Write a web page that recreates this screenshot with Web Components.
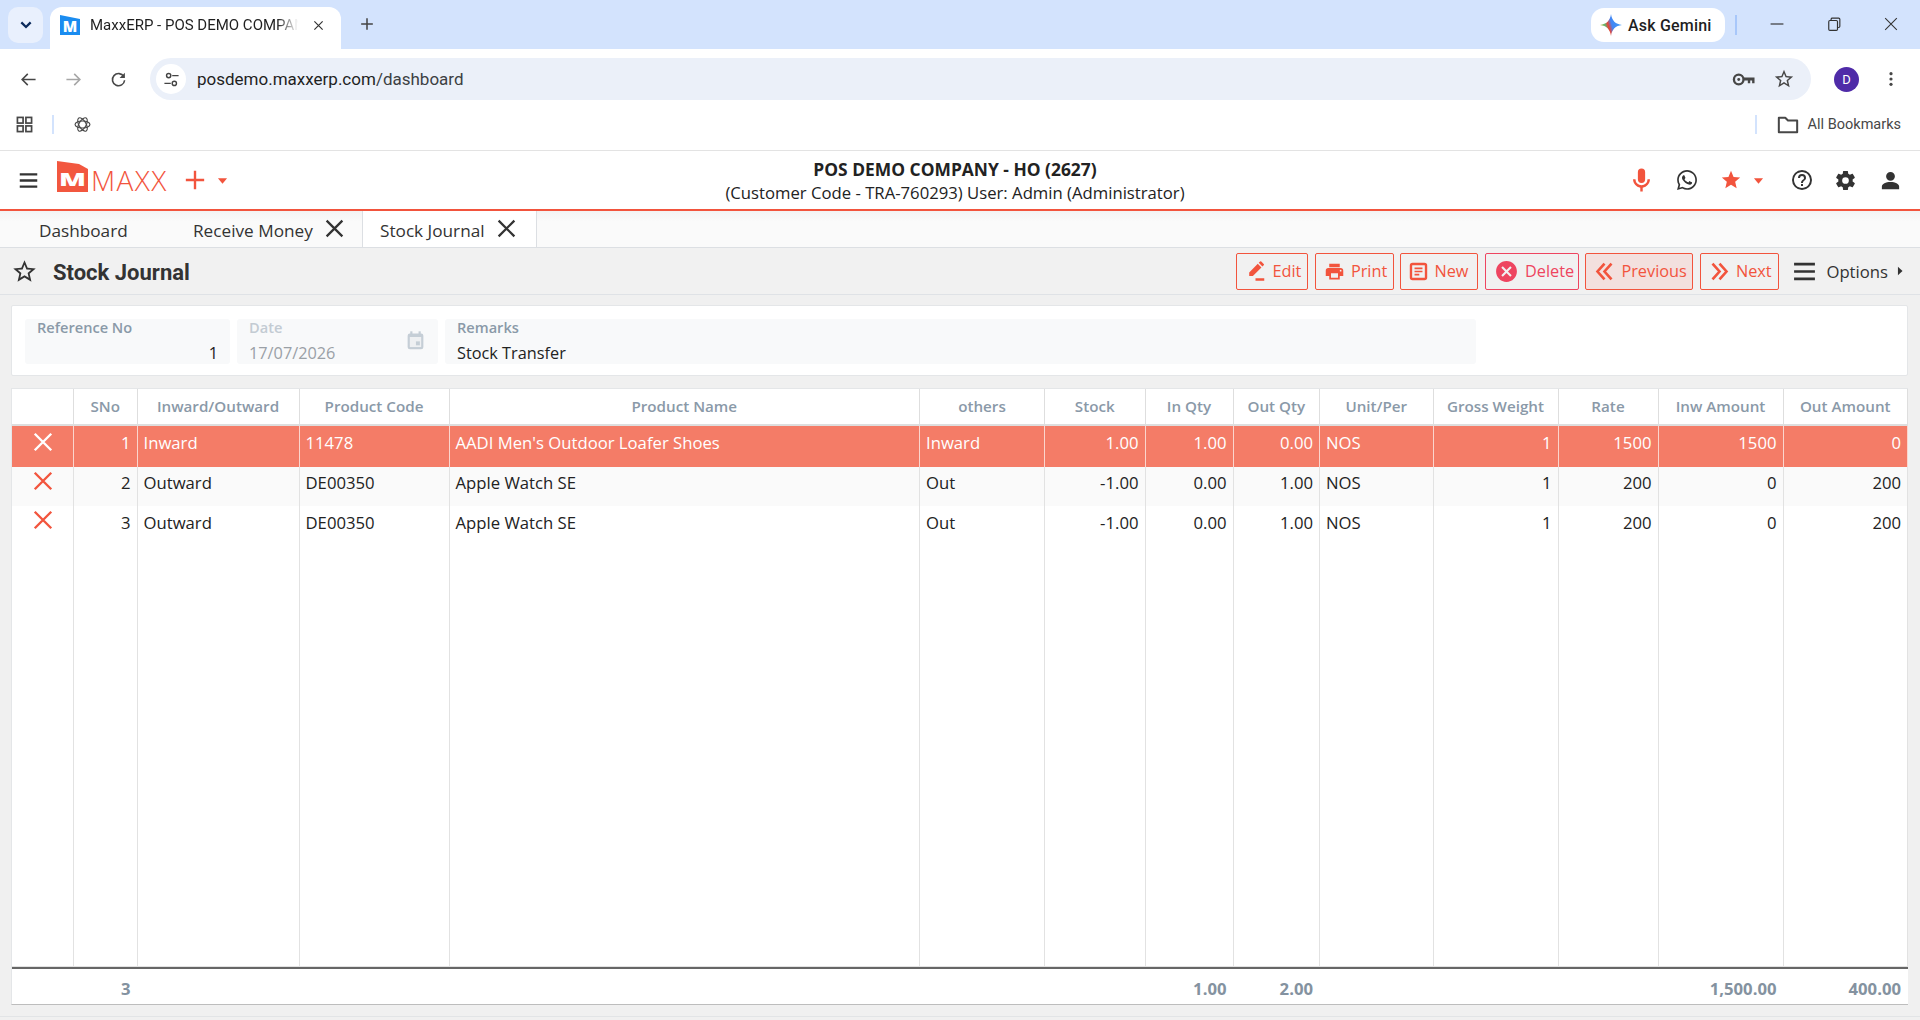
<!DOCTYPE html>
<html lang="en">
<head>
<meta charset="utf-8">
<title>MaxxERP - POS DEMO COMPANY</title>
<style>
  html, body { margin: 0; height: 100%; overflow: hidden; }
  body { display: flex; flex-direction: column; height: 1020px; background: linear-gradient(#f0f0f0 1016px, #e2e4e6 1016px, #e2e4e6 1017px, #f0f0f0 1017px); font-family: "Open Sans", "Noto Sans", sans-serif; color: #212529; }
</style>
</head>
<body>
<browser-chrome></browser-chrome>
<app-header></app-header>
<app-tabs></app-tabs>
<title-bar></title-bar>
<journal-form></journal-form>
<journal-table></journal-table>

<script>
const PATHS = {
  print: 'M18,3H6V7H18M19,12A1,1 0 0,1 18,11A1,1 0 0,1 19,10A1,1 0 0,1 20,11A1,1 0 0,1 19,12M16,19H8V14H16M19,8H5A3,3 0 0,0 2,11V17H6V21H18V17H22V11A3,3 0 0,0 19,8Z',
  closeCircle: 'M12,2C17.53,2 22,6.47 22,12C22,17.53 17.53,22 12,22C6.47,22 2,17.53 2,12C2,6.47 6.47,2 12,2M15.59,7L12,10.59L8.41,7L7,8.41L10.59,12L7,15.59L8.41,17L12,13.41L15.59,17L17,15.59L13.41,12L17,8.41L15.59,7Z',
  mic: 'M12,2A3,3 0 0,1 15,5V11A3,3 0 0,1 12,14A3,3 0 0,1 9,11V5A3,3 0 0,1 12,2M19,11C19,14.53 16.39,17.44 13,17.93V21H11V17.93C7.61,17.44 5,14.53 5,11H7A5,5 0 0,0 12,16A5,5 0 0,0 17,11H19Z',
  whatsapp: 'M12.04 2C6.58 2 2.13 6.45 2.13 11.91C2.13 13.66 2.59 15.36 3.45 16.86L2.05 22L7.3 20.62C8.75 21.41 10.38 21.83 12.04 21.83C17.5 21.83 21.95 17.38 21.95 11.92C21.95 9.27 20.92 6.78 19.05 4.91C17.18 3.03 14.69 2 12.04 2M12.05 3.67C14.25 3.67 16.31 4.53 17.87 6.09C19.42 7.65 20.28 9.72 20.28 11.92C20.28 16.46 16.58 20.15 12.04 20.15C10.56 20.15 9.11 19.76 7.85 19L7.55 18.83L4.43 19.65L5.26 16.61L5.06 16.29C4.24 15 3.8 13.47 3.8 11.91C3.81 7.37 7.5 3.67 12.05 3.67M8.53 7.33C8.37 7.33 8.1 7.39 7.87 7.64C7.65 7.89 7 8.5 7 9.71C7 10.93 7.89 12.1 8 12.27C8.14 12.44 9.76 14.94 12.25 16C12.84 16.27 13.3 16.42 13.66 16.53C14.25 16.72 14.79 16.69 15.22 16.63C15.7 16.56 16.68 16.03 16.89 15.45C17.1 14.87 17.1 14.38 17.04 14.27C16.97 14.17 16.81 14.11 16.56 14C16.31 13.86 15.09 13.26 14.87 13.18C14.64 13.1 14.5 13.06 14.31 13.3C14.15 13.55 13.67 14.11 13.53 14.27C13.38 14.44 13.24 14.46 13 14.34C12.74 14.21 11.94 13.95 11 13.11C10.26 12.45 9.77 11.64 9.62 11.39C9.5 11.15 9.61 11 9.73 10.89C9.84 10.78 10 10.6 10.1 10.45C10.23 10.31 10.27 10.2 10.35 10.04C10.43 9.87 10.39 9.73 10.33 9.61C10.27 9.5 9.77 8.26 9.56 7.77C9.36 7.29 9.16 7.35 9 7.34C8.86 7.34 8.7 7.33 8.53 7.33Z',
  star: 'M12,17.27L18.18,21L16.54,13.97L22,9.24L14.81,8.62L12,2L9.19,8.62L2,9.24L7.45,13.97L5.82,21L12,17.27Z',
  starOutline: 'M12,15.39L8.24,17.66L9.23,13.38L5.91,10.5L10.29,10.13L12,6.09L13.71,10.13L18.09,10.5L14.77,13.38L15.76,17.66M22,9.24L14.81,8.62L12,2L9.19,8.62L2,9.24L7.45,13.97L5.82,21L12,17.27L18.18,21L16.54,13.97L22,9.24Z',
  help: 'M11,18H13V16H11V18M12,2A10,10 0 0,0 2,12A10,10 0 0,0 12,22A10,10 0 0,0 22,12A10,10 0 0,0 12,2M12,20C7.59,20 4,16.41 4,12C4,7.59 7.59,4 12,4C16.41,4 20,7.59 20,12C20,16.41 16.41,20 12,20M12,6A4,4 0 0,0 8,10H10A2,2 0 0,1 12,8A2,2 0 0,1 14,10C14,12 11,11.75 11,15H13C13,12.75 16,12.5 16,10A4,4 0 0,0 12,6Z',
  cog: 'M12,15.5A3.5,3.5 0 0,1 8.5,12A3.5,3.5 0 0,1 12,8.5A3.5,3.5 0 0,1 15.5,12A3.5,3.5 0 0,1 12,15.5M19.43,12.97C19.47,12.65 19.5,12.33 19.5,12C19.5,11.67 19.47,11.34 19.43,11L21.54,9.37C21.73,9.22 21.78,8.95 21.66,8.73L19.66,5.27C19.54,5.05 19.27,4.96 19.05,5.05L16.56,6.05C16.04,5.66 15.5,5.32 14.87,5.07L14.5,2.42C14.46,2.18 14.25,2 14,2H10C9.75,2 9.54,2.18 9.5,2.42L9.13,5.07C8.5,5.32 7.96,5.66 7.44,6.05L4.95,5.05C4.73,4.96 4.46,5.05 4.34,5.27L2.34,8.73C2.21,8.95 2.27,9.22 2.46,9.37L4.57,11C4.53,11.34 4.5,11.67 4.5,12C4.5,12.33 4.53,12.65 4.57,12.97L2.46,14.63C2.27,14.78 2.21,15.05 2.34,15.27L4.34,18.73C4.46,18.95 4.73,19.03 4.95,18.95L7.44,17.94C7.96,18.34 8.5,18.68 9.13,18.93L9.5,21.58C9.54,21.82 9.75,22 10,22H14C14.25,22 14.46,21.82 14.5,21.58L14.87,18.93C15.5,18.67 16.04,18.34 16.56,17.94L19.05,18.95C19.27,19.03 19.54,18.95 19.66,18.73L21.66,15.27C21.78,15.05 21.73,14.78 21.54,14.63L19.43,12.97Z',
  user: 'M12,3A4.6,4.6 0 0,1 16.6,7.6A4.6,4.6 0 0,1 12,12.2A4.6,4.6 0 0,1 7.4,7.6A4.6,4.6 0 0,1 12,3M12,13.6C17,13.6 21,15.6 21,18.2V21H3V18.2C3,15.6 7,13.6 12,13.6Z',
  edit: 'M14.6,3.2L18.8,7.4L9,17.2H4.8V13ZM15.7,2.1L17.2,.6A1,1 0 0,1 18.6,.6L21.4,3.4A1,1 0 0,1 21.4,4.8L19.9,6.3ZM12,19.6H22V22.6H12Z'
};

// stroke icons are kept as plain svg children, filled ones come from PATHS
const STROKES = {
  chevL2: '<path d="M12 3L4 12l8 9M20 3l-8 9 8 9" fill="none" stroke="currentColor" stroke-width="3"/>',
  chevR2: '<path d="M4 3l8 9-8 9M12 3l8 9-8 9" fill="none" stroke="currentColor" stroke-width="3"/>',
  form: '<rect x="2.5" y="2.5" width="19" height="19" rx="2" fill="none" stroke="currentColor" stroke-width="3"/><path d="M7 8h10M7 12h10M7 16h6" stroke="currentColor" stroke-width="2.2"/>',
  menu: '<path d="M2 5h20M2 12h20M2 19h20" stroke="currentColor" stroke-width="2.6"/>',
  xThin: '<path d="M3 3l18 18M21 3L3 21" stroke="currentColor" stroke-width="2.6"/>',
  plus: '<path d="M12 2v20M2 12h20" stroke="currentColor" stroke-width="2.6"/>',
  back: '<path d="M22 12H3M11 4l-8 8 8 8" fill="none" stroke="currentColor" stroke-width="2.2"/>',
  forward: '<path d="M2 12h19M13 4l8 8-8 8" fill="none" stroke="currentColor" stroke-width="2.2"/>',
  reload: '<path d="M19.5 8A8.6 8.6 0 1 0 20.6 13" fill="none" stroke="currentColor" stroke-width="2.2"/><path d="M21 2.5V10h-7.5z" fill="currentColor"/>',
  tune: '<circle cx="8" cy="6.5" r="3" fill="none" stroke="currentColor" stroke-width="2"/><path d="M13 6.5h9M2 17.5h9" stroke="currentColor" stroke-width="2"/><circle cx="16" cy="17.5" r="3" fill="none" stroke="currentColor" stroke-width="2"/>',
  apps: '<g fill="none" stroke="currentColor" stroke-width="2.4"><rect x="2" y="2" width="8" height="8"/><rect x="14" y="2" width="8" height="8"/><rect x="2" y="14" width="8" height="8"/><rect x="14" y="14" width="8" height="8"/></g>',
  openai: '<g fill="none" stroke="currentColor" stroke-width="1.6"><ellipse cx="12" cy="12" rx="10.5" ry="5"/><ellipse cx="12" cy="12" rx="10.5" ry="5" transform="rotate(60 12 12)"/><ellipse cx="12" cy="12" rx="10.5" ry="5" transform="rotate(120 12 12)"/></g>',
  key: '<circle cx="7" cy="12" r="5" fill="none" stroke="currentColor" stroke-width="2.4"/><circle cx="7" cy="12" r="1.5" fill="currentColor"/><path d="M12 10h11.5v6H21v-3h-2v3h-2.5v-3H12z" fill="currentColor"/>',
  folder: '<path d="M2 20V4h7l3 3h10v13z" fill="none" stroke="currentColor" stroke-width="2.2" stroke-linejoin="round"/>',
  dots: '<circle cx="12" cy="4" r="2.4" fill="currentColor"/><circle cx="12" cy="12" r="2.4" fill="currentColor"/><circle cx="12" cy="20" r="2.4" fill="currentColor"/>',
  minimize: '<path d="M1 12h22" stroke="currentColor" stroke-width="2"/>',
  restore: '<path d="M7 5V3.5A2 2 0 0 1 9 2h11a2 2 0 0 1 2 2v12a2 2 0 0 1-2 2h-1" fill="none" stroke="currentColor" stroke-width="2"/><rect x="3" y="6" width="15" height="17" rx="2" fill="none" stroke="currentColor" stroke-width="2"/>',
  winClose: '<path d="M2 2l20 20M22 2L2 22" stroke="currentColor" stroke-width="1.8"/>',
  calendar: '<rect x="3" y="4" width="18" height="18" rx="2.5" fill="currentColor"/><rect x="6" y="1.5" width="2.5" height="4" fill="currentColor"/><rect x="15.5" y="1.5" width="2.5" height="4" fill="currentColor"/><rect x="5.5" y="8" width="13" height="11.5" fill="#eef0f2"/><rect x="12.5" y="13" width="4.5" height="4.5" fill="currentColor"/>',
  gemini: '<defs><linearGradient id="g" x1="0" y1=".8" x2="1" y2=".5"><stop offset="0" stop-color="#f9ab00"/><stop offset=".28" stop-color="#5bb974"/><stop offset=".42" stop-color="#ea4335"/><stop offset=".58" stop-color="#4285f4"/><stop offset="1" stop-color="#3f9bf5"/></linearGradient></defs><path d="M12 0C12.8 7 17 11.2 24 12 17 12.8 12.8 17 12 24 11.2 17 7 12.8 0 12 7 11.2 11.2 7 12 0z" fill="url(#g)"/>',
  caretDown: '<path d="M2 7h20L12 19z" fill="currentColor"/>',
  caretRight: '<path d="M7 2v20l11-10z" fill="currentColor"/>',
  chevDown: '<path d="M5 8l7 7 7-7" fill="none" stroke="currentColor" stroke-width="3.4"/>'
};

class UiIcon extends HTMLElement {
  connectedCallback() {
    const name = this.getAttribute('name');
    const size = this.getAttribute('size') || 24;
    const inner = PATHS[name] ? `<path d="${PATHS[name]}" fill="currentColor"/>` : STROKES[name];
    this.attachShadow({ mode: 'open' }).innerHTML = `
      <style>
        :host { display: inline-flex; flex: none; }
        svg { display: block; }
      </style>
      <svg width="${size}" height="${size}" viewBox="0 0 24 24">${inner}</svg>`;
  }
}
customElements.define('ui-icon', UiIcon);

class BrowserChrome extends HTMLElement {
  constructor() {
    super();
    this.attachShadow({ mode: 'open' }).innerHTML = `
      <style>
        :host { display: block; height: 151px; background: #fff; font-family: "Roboto", "Open Sans", sans-serif; color: #1f1f1f; border-bottom: 1px solid #e3e3e3; box-sizing: border-box; }
        .strip { height: 49px; background: #d3e3fd; display: flex; align-items: flex-start; }
        .more { width: 35px; height: 36px; margin: 7px 0 0 8px; background: #e9f0fd; border-radius: 10px; display: grid; place-content: center; color: #0b2a5c; }
        .tab { width: 291px; height: 42px; margin: 7px 0 0 7px; background: #fff; border-radius: 12px 12px 0 0; display: flex; align-items: center; box-sizing: border-box; padding: 0 13px 6px 10px; }
        .fav { width: 20px; height: 20px; flex: none; }
        .tab-title { width: 208px; margin-left: 10px; font-size: 15px; white-space: nowrap; -webkit-mask-image: linear-gradient(90deg, #000 90%, transparent); mask-image: linear-gradient(90deg, #000 90%, transparent); }
        .tab ui-icon { margin-left: 15px; color: #333; }
        .add { margin: 17px 0 0 19px; color: #444; }
        .spacer { flex: 1; }
        .gemini { width: 134px; height: 34px; margin-top: 8px; background: #fff; border-radius: 13px; display: flex; align-items: center; gap: 6px; padding-left: 9px; box-sizing: border-box; font-size: 16px; font-weight: 500; letter-spacing: .2px; }
        .sep { width: 2px; height: 20px; background: #a8c7fa; }
        .strip .sep { margin: 15px 33px 0 10px; }
        .win { display: flex; gap: 43px; margin: 17px 22px 0 0; color: #333; align-items: center; height: 14px; }
        .toolbar { height: 51px; display: flex; align-items: center; box-sizing: border-box; padding: 9px 0 0 20px; }
        .nav { display: flex; gap: 28px; color: #474747; margin-right: 23px; }
        .nav .off { color: #a6a6a6; }
        .omni { width: 1661px; height: 42px; background: #ebf0f9; border-radius: 21px; display: flex; align-items: center; }
        .tune { width: 30px; height: 30px; margin-left: 6px; border-radius: 50%; background: #fff; display: grid; place-content: center; color: #444; }
        .url { margin-left: 11px; font-size: 17px; color: #3c4043; flex: 1; }
        .url b { font-weight: 400; color: #1f1f1f; }
        .omni .right { display: flex; align-items: center; gap: 18px; margin-right: 16px; color: #474747; }
        .avatar { width: 25px; height: 25px; border-radius: 50%; background: #4f2ba8; color: #fff; font-size: 13px; display: grid; place-content: center; margin-left: 23px; }
        .dots { margin-left: 24px; color: #474747; }
        .bookmarks { height: 50px; display: flex; align-items: center; padding-left: 16px; color: #474747; box-sizing: border-box; padding-bottom: 1px; }
        .bookmarks .sep { height: 19px; margin: 0 20px 0 19px; background: #d3e3fd; }
        .bookmarks .end { margin-left: auto; display: flex; align-items: center; color: #474747; font-size: 14.5px; margin-right: 19px; }
        .bookmarks .end .sep { margin: 0 20px 0 0; }
        .bookmarks .end span { margin-left: 9px; }
      </style>
      <div class="strip">
        <div class="more"><ui-icon name="chevDown" size="16"></ui-icon></div>
        <div class="tab">
          <svg class="fav" viewBox="0 0 20 20"><path d="M0 0l20 4v16H0z" fill="#1a8cf0"/><text x="10" y="17" text-anchor="middle" font-family="Open Sans" font-weight="800" font-size="15" fill="#fff">M</text></svg>
          <span class="tab-title">MaxxERP - POS DEMO COMPAN</span>
          <ui-icon name="xThin" size="11"></ui-icon>
        </div>
        <ui-icon class="add" name="plus" size="14"></ui-icon>
        <div class="spacer"></div>
        <div class="gemini"><ui-icon name="gemini" size="22"></ui-icon>Ask Gemini</div>
        <div class="sep"></div>
        <div class="win">
          <ui-icon name="minimize" size="14"></ui-icon>
          <ui-icon name="restore" size="14"></ui-icon>
          <ui-icon name="winClose" size="14"></ui-icon>
        </div>
      </div>
      <div class="toolbar">
        <div class="nav">
          <ui-icon name="back" size="17"></ui-icon>
          <ui-icon class="off" name="forward" size="17"></ui-icon>
          <ui-icon name="reload" size="17"></ui-icon>
        </div>
        <div class="omni">
          <div class="tune"><ui-icon name="tune" size="17"></ui-icon></div>
          <span class="url"><b>posdemo.maxxerp.com</b>/dashboard</span>
          <div class="right">
            <ui-icon name="key" size="23"></ui-icon>
            <ui-icon name="starOutline" size="22"></ui-icon>
          </div>
        </div>
        <div class="avatar">D</div>
        <ui-icon class="dots" name="dots" size="16"></ui-icon>
      </div>
      <div class="bookmarks">
        <ui-icon name="apps" size="17"></ui-icon>
        <div class="sep"></div>
        <ui-icon name="openai" size="17"></ui-icon>
        <div class="end">
          <div class="sep"></div>
          <ui-icon name="folder" size="22"></ui-icon>
          <span>All Bookmarks</span>
        </div>
      </div>`;
  }
}
customElements.define('browser-chrome', BrowserChrome);

class AppHeader extends HTMLElement {
  constructor() {
    super();
    this.attachShadow({ mode: 'open' }).innerHTML = `
      <style>
        :host { display: flex; align-items: center; height: 60px; flex: none; box-sizing: border-box; background: #fff; border-bottom: 2px solid #f2543d; color: #333; }
        .left { display: flex; align-items: center; width: 470px; padding-left: 18px; box-sizing: border-box; flex: none; }
        .logo { width: 31px; height: 31px; margin-left: 18px; margin-top: -8px; }
        .brand { margin-left: 3px; font-size: 28px; font-weight: 300; color: #f2543d; letter-spacing: 1.4px; line-height: 30px; }
        .plus { margin-left: 16px; color: #f2543d; }
        .caret { margin-left: 11px; color: #f2543d; }
        .center { flex: 1; text-align: center; font-size: 16.7px; line-height: 24px; color: #222; white-space: nowrap; padding-top: 2px; }
        .center b { display: block; font-size: 17.4px; font-weight: 700; }
        .right { width: 480px; flex: none; display: flex; align-items: center; justify-content: flex-end; color: #333; }
        .red { color: #f2543d; }
      </style>
      <div class="left">
        <ui-icon name="menu" size="21"></ui-icon>
        <svg class="logo" viewBox="0 0 31 31"><path d="M0 0l22 3 9 5v23H0z" fill="#f2573f"/><text x="15.5" y="25" text-anchor="middle" font-family="Open Sans" font-weight="800" font-size="18" textLength="27" lengthAdjust="spacingAndGlyphs" fill="#fff">M</text></svg>
        <span class="brand">MAXX</span>
        <ui-icon class="plus" name="plus" size="22"></ui-icon>
        <ui-icon class="caret" name="caretDown" size="11"></ui-icon>
      </div>
      <div class="center"><b>POS DEMO COMPANY - HO (2627)</b>(Customer Code - TRA-760293) User: Admin (Administrator)</div>
      <div class="right">
        <ui-icon class="red" name="mic" size="29" style="margin-right:19px"></ui-icon>
        <ui-icon name="whatsapp" size="24" style="margin-right:21px"></ui-icon>
        <ui-icon class="red" name="star" size="22" style="margin-right:11px"></ui-icon>
        <ui-icon class="red" name="caretDown" size="11" style="margin-right:26px"></ui-icon>
        <ui-icon name="help" size="24" style="margin-right:20px"></ui-icon>
        <ui-icon name="cog" size="23" style="margin-right:22px"></ui-icon>
        <ui-icon name="user" size="23" style="margin-right:18px"></ui-icon>
      </div>`;
  }
}
customElements.define('app-header', AppHeader);

class AppTabs extends HTMLElement {
  constructor() {
    super();
    this.attachShadow({ mode: 'open' }).innerHTML = `
      <style>
        :host { display: flex; height: 37px; flex: none; box-sizing: border-box; background: linear-gradient(#f3f3f3, #fafafa 30%); border-bottom: 1px solid #dcdfe3; font-size: 17.2px; color: #333; }
        .tab { display: flex; align-items: center; box-sizing: border-box; height: 100%; white-space: nowrap; padding-top: 2px; }
        ui-icon { margin-left: 11px; margin-top: -3px; }
        .active { background: #fff; border: solid #dcdfe3; border-width: 0 1px; }
      </style>
      <div class="tab" style="width:193px;padding-left:39px">Dashboard</div>
      <div class="tab" style="width:169px"><span>Receive Money</span><ui-icon name="xThin" size="21"></ui-icon></div>
      <div class="tab active" style="width:175px;padding-left:17px"><span>Stock Journal</span><ui-icon name="xThin" size="21"></ui-icon></div>`;
  }
}
customElements.define('app-tabs', AppTabs);

class ActionButton extends HTMLElement {
  constructor() {
    super();
    this.attachShadow({ mode: 'open' }).innerHTML = `
      <style>
        :host { display: inline-flex; align-items: center; height: 37px; box-sizing: border-box; border: 1px solid #f2543d; border-radius: 2px; color: #f2543d; font-size: 16.3px; padding-left: 8px; gap: 6px; white-space: nowrap; }
        :host([pressed]) { background: #f3e0de; }
        :host([danger]) { border-color: #ee4560; color: #ee4560; }
      </style>
      <slot name="icon"></slot><slot></slot>`;
  }
}
customElements.define('action-button', ActionButton);

class TitleBar extends HTMLElement {
  constructor() {
    super();
    this.attachShadow({ mode: 'open' }).innerHTML = `
      <style>
        :host { display: flex; align-items: center; height: 47px; flex: none; box-sizing: border-box; background: #f1f1f1; border-bottom: 1px solid #dfe2e6; padding: 0 15px 0 11px; color: #333; }
        h1 { margin: 2px 0 0 15px; font: 700 22px "Roboto", sans-serif; }
        .actions { margin-left: auto; display: flex; align-items: center; gap: 6.5px; }
        .options { display: flex; align-items: center; margin-left: 7px; font-size: 16.7px; color: #333; }
        .options span { margin-left: 9px; }
        .options .tri { margin-left: 7px; }
      </style>
      <ui-icon name="starOutline" size="27"></ui-icon>
      <h1>Stock Journal</h1>
      <div class="actions">
        <action-button style="width:72px"><ui-icon slot="icon" name="edit" size="21"></ui-icon>Edit</action-button>
        <action-button style="width:79px"><ui-icon slot="icon" name="print" size="21"></ui-icon>Print</action-button>
        <action-button style="width:78px"><ui-icon slot="icon" name="form" size="19"></ui-icon>New</action-button>
        <action-button style="width:94px" danger><ui-icon slot="icon" name="closeCircle" size="25"></ui-icon>Delete</action-button>
        <action-button style="width:108px" pressed><ui-icon slot="icon" name="chevL2" size="21"></ui-icon>Previous</action-button>
        <action-button style="width:79px"><ui-icon slot="icon" name="chevR2" size="21"></ui-icon>Next</action-button>
        <div class="options">
          <ui-icon name="menu" size="25"></ui-icon><span>Options</span>
          <ui-icon class="tri" name="caretRight" size="10"></ui-icon>
        </div>
      </div>`;
  }
}
customElements.define('title-bar', TitleBar);

class FormField extends HTMLElement {
  constructor() {
    super();
    this.attachShadow({ mode: 'open' }).innerHTML = `
      <style>
        :host { display: block; height: 45px; box-sizing: border-box; background: #f8f9fa; border-radius: 3px; padding: 0 12px; position: relative; }
        label { display: block; font-size: 14.6px; font-weight: 600; color: #8a99a8; line-height: 16px; }
        .value { font-size: 16.3px; line-height: 22px; margin-top: 7px; color: #222; }
        :host([numeric]) .value { text-align: right; }
        :host([disabled]) label { color: #c3cbd3; }
        :host([disabled]) .value { color: #9aa0a6; }
        ::slotted(ui-icon) { position: absolute; right: 12px; top: 11px; color: #c5ced6; }
      </style>
      <label></label><div class="value"></div><slot></slot>`;
  }
  connectedCallback() {
    this.shadowRoot.querySelector('label').textContent = this.getAttribute('label');
    this.shadowRoot.querySelector('.value').textContent = this.getAttribute('value');
  }
}
customElements.define('form-field', FormField);

class JournalForm extends HTMLElement {
  constructor() {
    super();
    this.attachShadow({ mode: 'open' }).innerHTML = `
      <style>
        :host { display: grid; grid-template-columns: 205px 201px 1031px; column-gap: 7px; height: 71px; flex: none; box-sizing: border-box; margin: 10px 12px 0 11px; padding: 13px 13px 0; background: #fff; border: 1px solid #e4e6e8; border-radius: 2px; }
      </style>
      <form-field label="Reference No" value="1" numeric></form-field>
      <form-field label="Date" value="17/07/2026" disabled><ui-icon name="calendar" size="21"></ui-icon></form-field>
      <form-field label="Remarks" value="Stock Transfer"></form-field>`;
  }
}
customElements.define('journal-form', JournalForm);

const COLUMNS = [
  { title: '', width: 62 },
  { title: 'SNo', width: 63.5, num: true },
  { title: 'Inward/Outward', width: 162 },
  { title: 'Product Code', width: 150 },
  { title: 'Product Name', width: 470.5 },
  { title: 'others', width: 125 },
  { title: 'Stock', width: 100.5, num: true },
  { title: 'In Qty', width: 88, num: true },
  { title: 'Out Qty', width: 86.5, num: true },
  { title: 'Unit/Per', width: 113.5 },
  { title: 'Gross Weight', width: 125, num: true },
  { title: 'Rate', width: 100, num: true },
  { title: 'Inw Amount', width: 125, num: true },
  { title: 'Out Amount', width: 124.5, num: true }
];

const ROWS = [
  ['1', 'Inward', '11478', "AADI Men's Outdoor Loafer Shoes", 'Inward', '1.00', '1.00', '0.00', 'NOS', '1', '1500', '1500', '0'],
  ['2', 'Outward', 'DE00350', 'Apple Watch SE', 'Out', '-1.00', '0.00', '1.00', 'NOS', '1', '200', '0', '200'],
  ['3', 'Outward', 'DE00350', 'Apple Watch SE', 'Out', '-1.00', '0.00', '1.00', 'NOS', '1', '200', '0', '200']
];

const TOTALS = ['', '3', '', '', '', '', '', '1.00', '2.00', '', '', '', '1,500.00', '400.00'];

class JournalTable extends HTMLElement {
  constructor() {
    super();
    this.attachShadow({ mode: 'open' });
    this.render();
  }

  render() {
    const cols = COLUMNS.map(c => c.width + 'px').join(' ');
    const numClass = i => (COLUMNS[i].num ? ' num' : '');

    const head = COLUMNS.map(c => `<div class="th">${c.title}</div>`).join('');
    const rows = ROWS.map((row, r) => `
      <div class="row r${r}">
        <div class="td del"><ui-icon name="xThin" size="22"></ui-icon></div>
        ${row.map((v, i) => `<div class="td${numClass(i + 1)}">${v}</div>`).join('')}
      </div>`).join('');
    const filler = COLUMNS.map(() => '<div class="td"></div>').join('');
    const foot = TOTALS.map(v => `<div class="tf">${v}</div>`).join('');

    this.shadowRoot.innerHTML = `
      <style>
        :host { display: flex; flex-direction: column; flex: none; height: 617px; box-sizing: border-box; margin: 12px 12px 0 11px; background: #fff; border: solid #e4e6e8; border-width: 1px 0 0 1px; border-bottom: 1px solid #bdbdbd; font-size: 16.7px; color: #222; }
        .row { display: grid; grid-template-columns: ${cols}; }
        .head { height: 35px; border-bottom: 2px solid #dedede; }
        .th { display: flex; align-items: center; justify-content: center; font-size: 15.2px; font-weight: 600; color: #8a99a8; border-right: 1px solid #dedede; padding-bottom: 2px; box-sizing: border-box; }
        .td { border-right: 1px solid #e2e2e2; padding: 0 6px 8px; display: flex; align-items: center; box-sizing: border-box; white-space: nowrap; }
        .td.num { justify-content: flex-end; }
        .td.del { justify-content: center; color: #f2543d; padding: 0 0 11px; }
        .r0 { height: 41px; background: #f47c67; color: #fff; }
        .r0 .td { border-right-color: #fbd5cd; }
        .r0 .td.del { color: #fff; padding-bottom: 10px; }
        .r1 { height: 38.5px; background: #fafafa; }
        .r2 { height: 40px; }
        .r2 .td { padding-bottom: 6px; }
        .r2 .td.del { padding-bottom: 12px; }
        .filler { flex: 1; border-bottom: 1px solid #e2e2e2; }
        .foot { height: 35px; border-top: 2px solid #666; flex: none; }
        .tf { display: flex; align-items: center; justify-content: flex-end; padding: 4px 7px 0; font-weight: 700; color: #8492a0; white-space: nowrap; min-width: 0; }
      </style>
      <div class="row head">${head}</div>
      ${rows}
      <div class="row filler">${filler}</div>
      <div class="row foot">${foot}</div>`;
  }
}
customElements.define('journal-table', JournalTable);
</script>
</body>
</html>
